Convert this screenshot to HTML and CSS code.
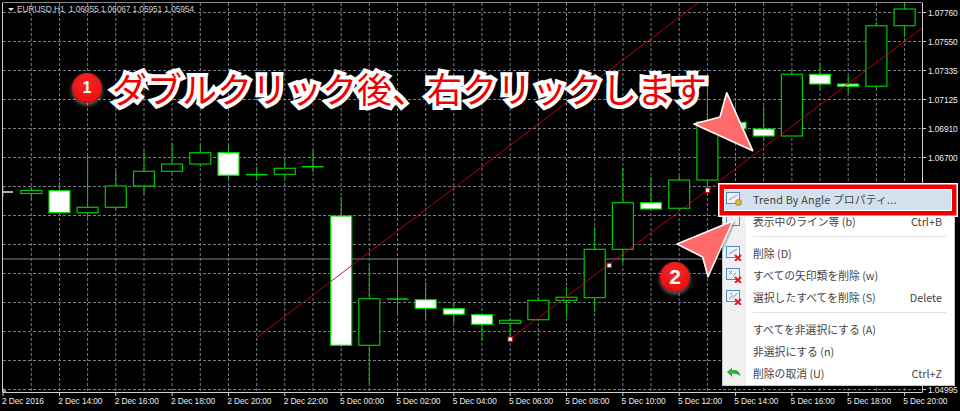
FILE: index.html
```html
<!DOCTYPE html>
<html lang="ja">
<head>
<meta charset="UTF-8">
<meta name="viewport" content="width=device-width, initial-scale=1.0">
<title>EURUSD,H1</title>
<link rel="stylesheet" href="styles.css">
</head>
<body>
<div class="chart">
    <div class="chart-row">
        <svg class="plot" width="927" height="396" viewBox="0 0 927 396">
            <path class="grid" d="M31.3 3V393M59.5 3V393M87.6 3V393M115.8 3V393M144 3V393M172.1 3V393M200.3 3V393M228.5 3V393M256.7 3V393M284.8 3V393M313 3V393M341.2 3V393M369.3 3V393M397.5 3V393M425.7 3V393M453.8 3V393M482 3V393M510.2 3V393M538.3 3V393M566.5 3V393M594.7 3V393M622.9 3V393M651 3V393M679.2 3V393M707.4 3V393M735.5 3V393M763.7 3V393M791.9 3V393M820 3V393M848.2 3V393M876.4 3V393M904.6 3V393"/>
            <path class="grid" d="M3 12.5H923M3 41.5H923M3 70.5H923M3 99.5H923M3 128.5H923M3 157.5H923M3 186.5H923M3 215.5H923M3 244.5H923M3 273.5H923M3 302.5H923M3 331.5H923M3 360.5H923M3 389.5H923"/>
            <path class="ask-line" d="M3 259H923"/>

            <!-- wicks -->
            <path class="wick" d="M3 187V197M31.3 187V200M59.5 182V215M87.6 156V220M115.8 171V209M144 151V194M172.1 143V173M200.3 145V167M228.5 145V179M256.7 167V179M284.8 161V179M313 150V172M341.2 197V347M369.3 264V384M397.5 261V316M425.7 282V320M453.8 302V323M482 315V341M510.2 318V339M538.3 297V320M566.5 287V317M594.7 227V312M622.9 168V263M651 177V209M679.2 176V209M707.4 85V190M735.5 102V135M763.7 106V141M791.9 70V136M820 63V89M848.2 76V93M876.4 22V88M904.6 3V37"/>

            <!-- candles -->
            <path class="doji-white" d="M3 192H13"/>
            <rect class="bull" x="20.8" y="190.5" width="21" height="3"/>
            <rect class="bear" x="49" y="190.7" width="21" height="22"/>
            <rect class="bull" x="77.1" y="207.3" width="21" height="5.4"/>
            <rect class="bull" x="105.3" y="186" width="21" height="21.3"/>
            <rect class="bull" x="133.5" y="171.3" width="21" height="14.7"/>
            <rect class="bull" x="161.6" y="164" width="21" height="7.3"/>
            <rect class="bull" x="189.8" y="152.7" width="21" height="11.3"/>
            <rect class="bear" x="218" y="152.7" width="21" height="22.6"/>
            <path class="doji" d="M246 174.7H267.5"/>
            <rect class="bull" x="274.3" y="168.3" width="21" height="6"/>
            <path class="doji" d="M302 166.7H323.5"/>
            <rect class="bear" x="330.7" y="216" width="21" height="129.3"/>
            <rect class="bull" x="358.8" y="298.7" width="21" height="46.6"/>
            <path class="doji" d="M387 299H408.5"/>
            <rect class="bear" x="415.2" y="299.7" width="21" height="8.6"/>
            <rect class="bear" x="443.3" y="308.7" width="21" height="5.6"/>
            <rect class="bear" x="471.5" y="314.7" width="21" height="9.6"/>
            <rect class="bull" x="499.7" y="320.3" width="21" height="3"/>
            <rect class="bull" x="527.8" y="300.3" width="21" height="19.4"/>
            <rect class="bull" x="556" y="297.3" width="21" height="3"/>
            <rect class="bull" x="584.2" y="249.3" width="21" height="48.4"/>
            <rect class="bull" x="612.4" y="202.7" width="21" height="46.6"/>
            <rect class="bear" x="640.5" y="202.7" width="21" height="6.3"/>
            <rect class="bull" x="668.7" y="180" width="21" height="28.3"/>
            <rect class="bull" x="696.9" y="121.7" width="21" height="58.3"/>
            <rect class="bear" x="725" y="122.3" width="21" height="6.7"/>
            <rect class="bear" x="753.2" y="129" width="21" height="7"/>
            <rect class="bull" x="781.4" y="74.3" width="21" height="61.7"/>
            <rect class="bear" x="809.5" y="74.3" width="21" height="9.7"/>
            <rect class="bear" x="837.7" y="84" width="21" height="2.3"/>
            <rect class="bull" x="865.9" y="25.7" width="21" height="60.6"/>
            <rect class="bull" x="894.1" y="9" width="21" height="16.7"/>

            <!-- trend lines -->
            <path class="trend" d="M256.7 337.7L698 3"/>
            <path class="trend" d="M510.2 339L922 28"/>
            <rect class="handle" x="508" y="337" width="4.4" height="4.4"/>
            <rect class="handle" x="607" y="263.2" width="4.4" height="4.4"/>
            <rect class="handle" x="705.4" y="188" width="4.4" height="4.4"/>

            <!-- frame and ticks -->
            <path class="frame" d="M2.5 3V392.5H922.5V3"/>
            <path class="frame-top" d="M2.5 2.5H922.5"/>
            <path class="frame" d="M923 12.5H926M923 41.5H926M923 70.5H926M923 99.5H926M923 128.5H926M923 157.5H926M923 186.5H926M923 389.5H926M3 393V396M59.5 393V396M115.8 393V396M172.1 393V396M228.5 393V396M284.8 393V396M341.2 393V396M397.5 393V396M453.8 393V396M510.2 393V396M566.5 393V396M622.9 393V396M679.2 393V396M735.5 393V396M791.9 393V396M848.2 393V396M904.6 393V396"/>
            <path class="corner" d="M3 388L7 392H3Z"/>
        </svg>
        <div class="price-axis">
            <span>1.07760</span>
            <span>1.07550</span>
            <span>1.07335</span>
            <span>1.07125</span>
            <span>1.06910</span>
            <span>1.06700</span>
            <span class="last-price">1.04995</span>
        </div>
    </div>
    <div class="time-axis">
        <span class="first">2 Dec 2016</span>
        <span>2 Dec 14:00</span>
        <span>2 Dec 16:00</span>
        <span>2 Dec 18:00</span>
        <span>2 Dec 20:00</span>
        <span>2 Dec 22:00</span>
        <span>5 Dec 00:00</span>
        <span>5 Dec 02:00</span>
        <span>5 Dec 04:00</span>
        <span>5 Dec 06:00</span>
        <span>5 Dec 08:00</span>
        <span>5 Dec 10:00</span>
        <span>5 Dec 12:00</span>
        <span>5 Dec 14:00</span>
        <span>5 Dec 16:00</span>
        <span>5 Dec 18:00</span>
        <span>5 Dec 20:00</span>
    </div>

    <div class="chart-title"><i class="title-arrow"></i>EURUSD,H1&nbsp; 1.06055 1.06067 1.05951 1.05954</div>

    <div class="menu">
        <div class="menu-item active">
            <svg class="menu-icon" viewBox="0 0 16 16">
                <rect class="icon-box" x="0.5" y="1.5" width="13" height="11"/>
                <path class="icon-line" d="M3 9L11 4"/>
                <circle class="icon-coin" cx="12.5" cy="11.5" r="3"/>
            </svg>
            <span class="label">Trend By Angle プロパティ...</span>
        </div>
        <div class="menu-item">
            <svg class="menu-icon" viewBox="0 0 16 16">
                <rect class="icon-box" x="0.5" y="1.5" width="13" height="11"/>
            </svg>
            <span class="label">表示中のライン等 (b)</span>
            <span class="shortcut">Ctrl+B</span>
        </div>
        <div class="menu-sep"></div>
        <div class="menu-item">
            <svg class="menu-icon" viewBox="0 0 16 16">
                <rect class="icon-box" x="0.5" y="1.5" width="13" height="11"/>
                <path class="icon-line" d="M3 9L11 4"/>
                <path class="icon-x" d="M9 10L15 16M15 10L9 16"/>
            </svg>
            <span class="label">削除 (D)</span>
        </div>
        <div class="menu-item">
            <svg class="menu-icon" viewBox="0 0 16 16">
                <rect class="icon-box" x="0.5" y="1.5" width="13" height="11"/>
                <path class="icon-line" d="M3 4L6 7M6 4L3 7M7 9L10 6"/>
                <path class="icon-x" d="M9 10L15 16M15 10L9 16"/>
            </svg>
            <span class="label">すべての矢印類を削除 (w)</span>
        </div>
        <div class="menu-item">
            <svg class="menu-icon" viewBox="0 0 16 16">
                <rect class="icon-box" x="0.5" y="1.5" width="13" height="11"/>
                <path class="icon-line" d="M3 10L7 6M7 9L11 4M4 5L6 4"/>
                <path class="icon-x" d="M9 10L15 16M15 10L9 16"/>
            </svg>
            <span class="label">選択したすべてを削除 (S)</span>
            <span class="shortcut">Delete</span>
        </div>
        <div class="menu-sep"></div>
        <div class="menu-item">
            <span class="menu-icon"></span>
            <span class="label">すべてを非選択にする (A)</span>
        </div>
        <div class="menu-item">
            <span class="menu-icon"></span>
            <span class="label">非選択にする (n)</span>
        </div>
        <div class="menu-item">
            <svg class="menu-icon" viewBox="0 0 16 16">
                <path class="icon-undo" d="M1 7L6 2.5V5.2C10.5 4.6 14 6.4 14.5 11.5C12.6 9 10 8.3 6 8.8V12Z"/>
            </svg>
            <span class="label">削除の取消 (U)</span>
            <span class="shortcut">Ctrl+Z</span>
        </div>
    </div>

    <svg class="pointers" width="960" height="411" viewBox="0 0 960 411">
        <polygon class="pointer" points="752.7,150.7 694,124 720,117 726.7,92.7"/>
        <polygon class="pointer" points="733,221 677,244 702.7,257 708,276.7"/>
    </svg>

    <div class="step step-one">1</div>
    <div class="step step-two">2</div>
    <div class="callout">ダブルクリック後、右クリックします</div>
</div>
</body>
</html>
```
FILE: styles.css
```css
html, body {
    margin: 0;
    background-color: #000;
}

.chart {
    position: relative;
    width: 960px;
    height: 411px;
    overflow: hidden;
    background-color: #000;
    font-family: "Liberation Sans", Arial, sans-serif;
    font-size: 8.4px;
    letter-spacing: -0.1px;
    color: #ececec;
}

.chart-row {
    display: flex;
    height: 396px;
}

.plot {
    display: block;
    flex: none;
}

.grid {
    fill: none;
    stroke: #757d8a;
    stroke-width: 1;
    stroke-dasharray: 3 2;
}

.ask-line {
    stroke: #7c828c;
    stroke-width: 1.2;
}

.wick {
    fill: none;
    stroke: #00c800;
    stroke-width: 1;
}

.bull {
    fill: #000;
    stroke: #00c800;
    stroke-width: 1.2;
}

.bear {
    fill: #fff;
    stroke: #00dc00;
    stroke-width: 1.2;
}

.doji {
    stroke: #00e000;
    stroke-width: 1.4;
}

.doji-white {
    stroke: #e8ffe8;
    stroke-width: 1.4;
}

.trend {
    fill: none;
    stroke: #cc000c;
    stroke-width: 0.9;
}

.handle {
    fill: #fff;
    stroke: #e00010;
    stroke-width: 1;
}

.frame {
    fill: none;
    stroke: #d0d0d0;
    stroke-width: 1;
}

.frame-top {
    stroke: #8a8a8a;
    stroke-width: 1;
}

.corner {
    fill: #9aa0a8;
}

.price-axis {
    flex: 1;
    display: flex;
    flex-direction: column;
    gap: 19px;
    padding: 8px 0 0 1px;
    box-sizing: border-box;
    height: 396px;
}

.price-axis span {
    display: block;
    height: 10px;
    line-height: 10px;
}

.price-axis .last-price {
    margin-top: auto;
    margin-bottom: 1px;
}

.time-axis {
    display: flex;
    height: 15px;
    line-height: 11px;
    white-space: nowrap;
}

.time-axis span {
    flex: none;
    width: 56.33px;
}

.time-axis .first {
    width: 58.33px;
    padding-left: 2px;
    box-sizing: border-box;
}

.chart-title {
    position: absolute;
    left: 8px;
    top: 4px;
    line-height: 10px;
    color: #cfcfcf;
    white-space: nowrap;
}

.title-arrow {
    display: inline-block;
    width: 0;
    height: 0;
    margin: 0 3px 1px 0;
    border-left: 3px solid transparent;
    border-right: 3px solid transparent;
    border-top: 3px solid #e0e0e0;
}

.menu {
    position: absolute;
    left: 722px;
    top: 188px;
    width: 233px;
    height: 198px;
    box-sizing: border-box;
    border: 1px solid #c8c8c8;
    border-top: none;
    background: linear-gradient(to right, #f0f0f0 23px, #fff 23px);
    font-family: "Noto Sans CJK JP", "Noto Sans", sans-serif;
    font-size: 10.8px;
    letter-spacing: 0;
    color: #444;
}

.menu-item {
    position: relative;
    display: flex;
    align-items: center;
    height: 22px;
    padding-right: 12px;
}

.menu-item.active {
    z-index: 1;
    isolation: isolate;
}

.menu-item.active .label {
    letter-spacing: 0.17px;
}

.menu-item.active::before {
    content: "";
    position: absolute;
    z-index: -1;
    left: 2px;
    right: 3px;
    top: 2px;
    bottom: 0;
    background-color: #d3e0ed;
    box-shadow: 0 0 0 1px #fff, 0 0 0 5.5px #f00000, 0 0 0 7px #fff;
}

.menu-icon {
    display: block;
    flex: none;
    width: 16px;
    height: 16px;
    margin: 0 11px 0 3px;
}

.label {
    flex: 1;
    white-space: nowrap;
}

.shortcut {
    flex: none;
}

.menu-sep {
    height: 1px;
    margin: 4px 8px 5px 30px;
    background-color: #e2e2e2;
}

.icon-box {
    fill: #eef3f9;
    stroke: #4f8cc4;
    stroke-width: 1;
}

.icon-line {
    fill: none;
    stroke: #8a8f96;
    stroke-width: 1;
}

.icon-coin {
    fill: #d8b84a;
    stroke: #a88a28;
    stroke-width: 1;
}

.icon-x {
    fill: none;
    stroke: #d8202c;
    stroke-width: 2;
}

.icon-undo {
    fill: #2fae3e;
}

.pointers {
    position: absolute;
    left: 0;
    top: 0;
    filter: drop-shadow(1px 1px 1px rgba(0, 0, 0, 0.4));
}

.pointer {
    fill: #ff6b6b;
    stroke: #fff;
    stroke-width: 1.6;
    stroke-linejoin: round;
}

.step {
    position: absolute;
    width: 30px;
    height: 30px;
    border-radius: 50%;
    background: radial-gradient(circle at 50% 35%, #f42a2a 0%, #ec1414 60%, #c80a0a 100%);
    box-shadow: 0 2px 4px rgba(210, 210, 210, 0.55);
    color: #fff;
    font-family: "Liberation Sans", Arial, sans-serif;
    font-weight: bold;
    letter-spacing: 0;
    text-align: center;
    line-height: 30px;
}

.step-one {
    left: 72px;
    top: 73px;
    font-size: 16px;
}

.step-two {
    left: 660px;
    top: 262px;
    font-size: 21px;
}

.callout {
    position: absolute;
    left: 112px;
    top: 62px;
    font-family: "Noto Sans CJK JP", "Noto Sans", sans-serif;
    font-size: 35px;
    font-weight: 400;
    letter-spacing: 0;
    line-height: 52px;
    color: #f00000;
    white-space: nowrap;
    -webkit-text-stroke: 8px #fff;
    paint-order: stroke fill;
}
```
